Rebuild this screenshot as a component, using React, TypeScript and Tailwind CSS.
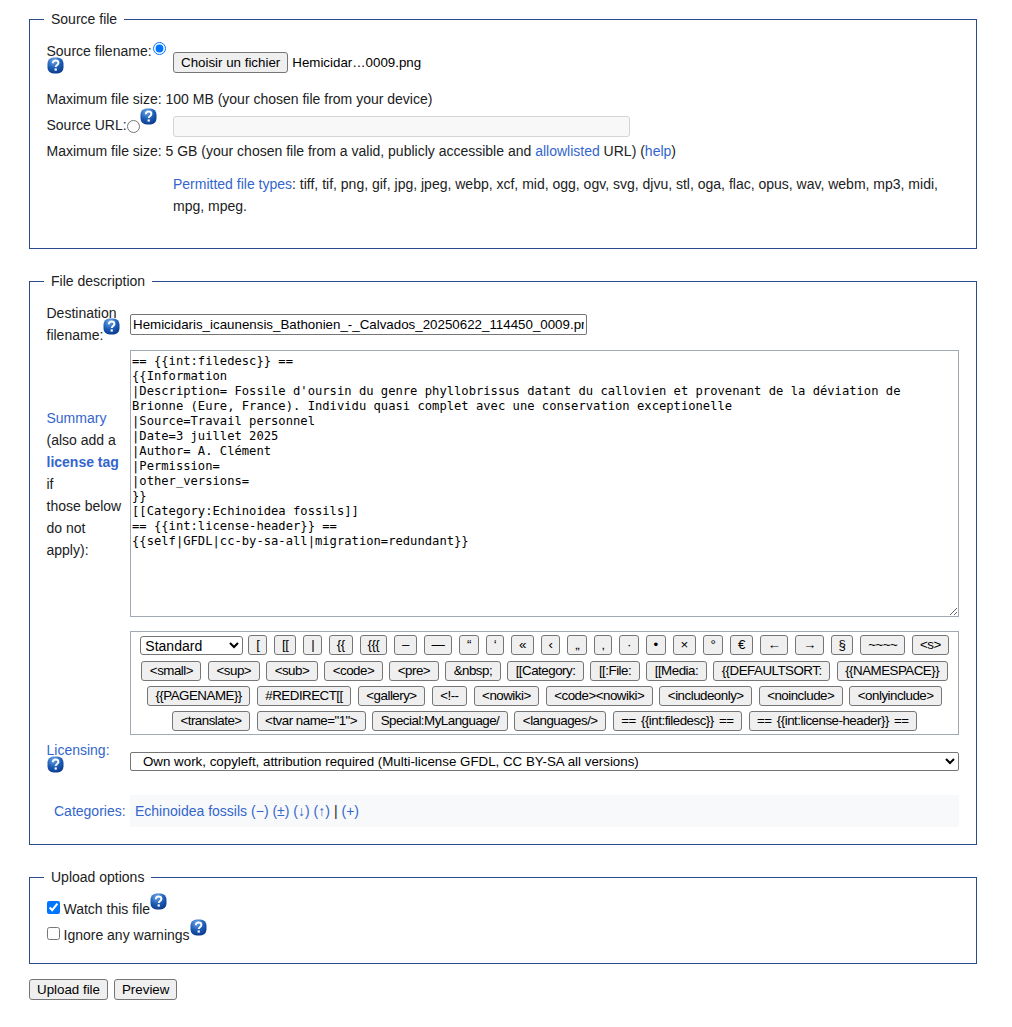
import { useId } from 'react';

const wikitext = `== {{int:filedesc}} ==
{{Information
|Description= Fossile d'oursin du genre phyllobrissus datant du callovien et provenant de la déviation de Brionne (Eure, France). Individu quasi complet avec une conservation exceptionelle
|Source=Travail personnel
|Date=3 juillet 2025
|Author= A. Clément
|Permission=
|other_versions=
}}
[[Category:Echinoidea fossils]]
== {{int:license-header}} ==
{{self|GFDL|cc-by-sa-all|migration=redundant}}
`;

const charButtons = ['[', '[[', '|', '{{', '{{{', '–', '—', '“', '‘', '«', '‹', '„', '‚', '·', '•', '×', '°', '€', '←', '→', '§', '~~~~', '<s>'];

const toolbarRows = [
  ['<small>', '<sup>', '<sub>', '<code>', '<pre>', '&nbsp;', '[[Category:', '[[:File:', '[[Media:', '{{DEFAULTSORT:', '{{NAMESPACE}}'],
  ['{{PAGENAME}}', '#REDIRECT[[', '<gallery>', '<!--', '<nowiki>', '<code><nowiki>', '<includeonly>', '<noinclude>', '<onlyinclude>'],
  ['<translate>', '<tvar name="1">', 'Special:MyLanguage/', '<languages/>', '== {{int:filedesc}} ==', '== {{int:license-header}} =='],
];

function Help({ className = '' }: { className?: string }) {
  const id = useId();
  return (
    <svg className={`block shrink-0 ${className}`} width="17" height="17" viewBox="0 0 17 17">
      <defs>
        <radialGradient id={id} cx="0.4" cy="0.2" r="0.95">
          <stop offset="0" stopColor="#6fa8e8" />
          <stop offset="0.5" stopColor="#1c5cb4" />
          <stop offset="1" stopColor="#082f80" />
        </radialGradient>
      </defs>
      <rect x="0.5" y="0.5" width="16" height="16" rx="6" fill={`url(#${id})`} />
      <path d="M5.8 6.2c0-1.7 1.2-2.7 2.8-2.7s2.8 1 2.8 2.4c0 2-2.7 2.1-2.7 4.2" fill="none" stroke="#fff" strokeWidth="1.9" />
      <rect x="7.6" y="11.4" width="2.2" height="2.2" fill="#fff" />
    </svg>
  );
}

function Box({ title, className, children }: { title: string; className: string; children: React.ReactNode }) {
  return (
    <fieldset className={`ml-[29px] w-[948px] border border-[#2a4b8d] px-[14px] ${className}`}>
      <legend className="px-[7px] text-[14px] leading-[21px] text-[#202122]">{title}</legend>
      <div className="pl-[2.5px]">{children}</div>
    </fieldset>
  );
}

export default function App() {
  return (
    <div className="min-h-[1027px] bg-white pt-[9px] font-['Liberation_Sans',Arial,sans-serif] text-[14px] leading-[22px] text-[#202122]">
      {/* Source file */}
      <Box title="Source file" className="h-[240px]">
        <div className="flex h-[47px] pt-[10px]">
          <div className="w-[126.5px]">
            <div className="flex">
              Source filename:
              <input type="radio" name="src" defaultChecked className="m-0 mt-[2px] ml-px h-[13px] w-[13px]" />
            </div>
            <Help className="-mt-[5px]" />
          </div>
          <div className="flex h-[22px] items-center pt-[22px]">
            <button type="button" className="h-[21px] rounded-[3px] border border-[#767676] bg-[#efefef] px-[7px] pt-px text-[13.33px] leading-[16px] text-black">
              Choisir un fichier
            </button>
            <span className="ml-[4px] mt-px text-[13.33px] text-black">Hemicidar…0009.png</span>
          </div>
        </div>
        <div className="mt-[11px]">Maximum file size: 100 MB (your chosen file from your device)</div>
        <div className="mt-[4px] flex h-[22px]">
          <div className="flex w-[126.5px]">
            Source URL:
            <input type="radio" name="src" className="m-0 mt-[6px] h-[13px] w-[13px]" />
            <Help className="-mt-[6px]" />
          </div>
          <input type="text" disabled className="mt-[2px] h-[21px] w-[457px] rounded-[3px] border border-[#d4d4d4] bg-[#f8f8f8]" />
        </div>
        <div className="mt-[4px]">
          Maximum file size: 5 GB (your chosen file from a valid, publicly accessible and{' '}
          <a className="text-[#3366cc]">allowlisted</a> URL) (<a className="text-[#3366cc]">help</a>)
        </div>
        <div className="mt-[11px] ml-[126.5px] w-[780px]">
          <a className="text-[#3366cc]">Permitted file types</a>: tiff, tif, png, gif, jpg, jpeg, webp, xcf, mid, ogg, ogv, svg, djvu, stl, oga, flac, opus, wav, webm, mp3, midi, mpg, mpeg.
        </div>
      </Box>

      {/* File description */}
      <Box title="File description" className="mt-[22px] h-[574px]">
        <div className="mt-[10px] flex">
          <div className="relative w-[83.5px]">
            Destination
            <br />
            filename:
            <Help className="absolute top-[16px] left-[56px]" />
          </div>
          <input
            type="text"
            readOnly
            value="Hemicidaris_icaunensis_Bathonien_-_Calvados_20250622_114450_0009.png"
            className="mt-[12px] h-[21px] w-[457px] rounded-[2px] border border-[#767676] bg-white px-[2px] text-[13.33px] text-black outline-none"
          />
        </div>
        <div className="mt-[4px] flex items-center">
          <div className="w-[83.5px]">
            <a className="text-[#3366cc]">Summary</a>
            <br />
            (also add a
            <br />
            <a className="font-bold text-[#3366cc]">license tag</a>
            <br />
            if
            <br />
            those below
            <br />
            do not
            <br />
            apply):
          </div>
          <textarea
            readOnly
            defaultValue={wikitext}
            className="block h-[267px] w-[829px] border border-[#a2a9b1] bg-white px-[1px] pt-[3px] pb-[2px] font-['DejaVu_Sans_Mono',monospace] text-[12.16px] leading-[15px] text-black outline-none"
          />
        </div>
        <div className="mt-[14px] ml-[83.5px] flex h-[104px] w-[829px] flex-col items-center gap-y-[5px] border border-[#a2a9b1] pt-[4px]">
          <div className="-mt-px mb-px flex items-center gap-x-[7px]">
            <select className="-mr-[2px] h-[19px] w-[103px] rounded-[3px] border border-[#767676] bg-white text-[14px] leading-[17px] text-black">
              <option>Standard</option>
            </select>
            {charButtons.map((t) => (
              <button
                key={t}
                type="button"
                className="h-[20px] whitespace-nowrap rounded-[3px] border border-[#767676] bg-[#efefef] px-[6.85px] text-[13.33px] leading-[16px] tracking-[-0.5px] text-black"
              >
                {t}
              </button>
            ))}
          </div>
          {toolbarRows.map((row) => (
            <div key={row[0]} className="flex gap-x-[6.67px]">
              {row.map((t) => (
                <button
                  key={t}
                  type="button"
                  className={`h-[20px] whitespace-nowrap rounded-[3px] border border-[#767676] bg-[#efefef] px-[7.45px] text-[13.33px] leading-[16px] tracking-[-0.5px] text-black ${t.startsWith('==') ? '[word-spacing:2px]' : ''}`}
                >
                  {t}
                </button>
              ))}
            </div>
          ))}
        </div>
        <div className="mt-[4px] flex">
          <div className="w-[83.5px]">
            <a className="text-[#3366cc]">Licensing:</a>
            <Help className="-mt-[5px]" />
          </div>
          <select className="mt-[13px] h-[19px] w-[829px] rounded-[2px] border border-[#767676] bg-white pl-[8px] text-[13.33px] leading-[16px] text-black">
            <option>Own work, copyleft, attribution required (Multi-license GFDL, CC BY-SA all versions)</option>
          </select>
        </div>
        <div className="mt-[22px] flex items-center">
          <div className="w-[83.5px] pl-[7.5px] text-[#3366cc]">Categories:</div>
          <div className="flex h-[32px] w-[829px] items-center bg-[#f8f9fa] pl-[5px]">
            <a className="text-[#3366cc]">Echinoidea fossils</a>
            <span className="ml-[4px] text-[#3366cc]">(−) (±) (↓) (↑)</span>
            <span className="mx-[4px]">|</span>
            <span className="text-[#3366cc]">(+)</span>
          </div>
        </div>
      </Box>

      {/* Upload options */}
      <Box title="Upload options" className="mt-[22px] h-[97px]">
        <div className="mt-[5px] flex items-start">
          <input type="checkbox" defaultChecked className="m-0 mt-[8px] h-[13px] w-[13px]" />
          <span className="ml-[4px] mt-[5px]">Watch this file</span>
          <Help />
        </div>
        <div className="-mt-[1px] flex items-start">
          <input type="checkbox" className="m-0 mt-[8px] h-[13px] w-[13px]" />
          <span className="ml-[4px] mt-[5px]">Ignore any warnings</span>
          <Help />
        </div>
      </Box>

      <div className="mt-[15px] ml-[29px] flex gap-x-[6px]">
        <button type="button" className="h-[21px] rounded-[3px] border border-[#767676] bg-[#efefef] px-[7px] text-[13.33px] leading-[16px] text-black">
          Upload file
        </button>
        <button type="button" className="h-[21px] rounded-[3px] border border-[#767676] bg-[#efefef] px-[7px] text-[13.33px] leading-[16px] text-black">
          Preview
        </button>
      </div>
    </div>
  );
}
